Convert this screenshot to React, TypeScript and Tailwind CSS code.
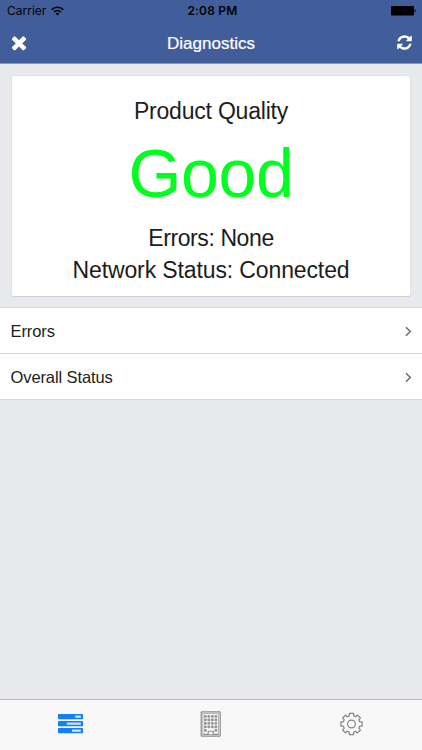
interface ListRowProps {
  label: string;
}

function StatusBar() {
  return (
    <div className="h-[22px] grid grid-cols-3 items-center pl-[7px] pr-[6px] text-black font-['Inter',sans-serif] text-[12px]">
      <div className="flex items-center gap-[5px]">
        <span>Carrier</span>
        <svg width="13" height="10" viewBox="0 0 13 10" fill="none" stroke="#000" strokeWidth="1.6">
          <path d="M.7 3.7a8.2 8.2 0 0 1 11.6 0" />
          <path d="M2.9 6a5.1 5.1 0 0 1 7.2 0" />
          <path d="M6.5 9.6 4.5 7.6a2.8 2.8 0 0 1 4 0z" fill="#000" stroke="none" />
        </svg>
      </div>
      <span className="pl-[2px] text-center font-semibold tracking-[0.2px]">2:08 PM</span>
      <svg className="justify-self-end" width="26" height="10" viewBox="0 0 26 10">
        <rect x="1" width="23" height="9.5" rx="1" />
        <path d="M24.7 3.2c1.4.3 1.4 2.8 0 3.1z" />
      </svg>
    </div>
  );
}

function Header() {
  return (
    <header className="h-16 shrink-0 bg-[#415e9b] border-b border-[#8698be]">
      <StatusBar />
      <div className="h-[41px] grid grid-cols-[1fr_auto_1fr] items-center pl-2 pr-[9px] text-white">
        <svg width="22" height="22" viewBox="0 0 1792 1856" fill="currentColor">
          <path d="M1490 1322q0 40-28 68l-136 136q-28 28-68 28t-68-28l-294-294-294 294q-28 28-68 28t-68-28l-136-136q-28-28-28-68t28-68l294-294-294-294q-28-28-28-68t28-68l136-136q28-28 68-28t68 28l294 294 294-294q28-28 68-28t68 28l136 136q28 28 28 68t-28 68l-294 294 294 294q28 28 28 68z" />
        </svg>
        <h1 className="pt-[3px] pl-[1px] text-[17px] leading-[22px] [-webkit-text-stroke:0.2px_#fff]">Diagnostics</h1>
        <svg className="justify-self-end" width="17" height="17" viewBox="0 0 1792 1792" fill="currentColor">
          <path d="M1639 1056q0 5-1 7-64 268-268 434.5t-478 166.5q-146 0-282.5-55t-243.5-157l-129 129q-19 19-45 19t-45-19-19-45v-448q0-26 19-45t45-19h448q26 0 45 19t19 45-19 45l-137 137q71 66 161 102t187 36q134 0 250-65t186-179q11-17 53-117 8-23 30-23h192q13 0 22.5 9.5t9.5 22.5zm25-800v448q0 26-19 45t-45 19h-448q-26 0-45-19t-19-45 19-45l138-138q-148-137-349-137-134 0-250 65t-186 179q-11 17-53 117-8 23-30 23h-199q-13 0-22.5-9.5t-9.5-22.5v-7q65-268 270-434.5t480-166.5q146 0 284 55.5t245 156.5l130-129q19-19 45-19t45 19 19 45z" />
        </svg>
      </div>
    </header>
  );
}

function QualityCard() {
  return (
    <section className="mx-[11px] mt-[11px] h-[222px] shrink-0 rounded-[3px] border border-[#e1e2e5] border-b-[#cfd0d4] bg-white pt-[19px] flex flex-col items-center text-[23px] leading-8">
      <p className="tracking-[-0.2px]">Product Quality</p>
      <p className="h-[95px] text-[68px] leading-[92px] tracking-[-0.3px] text-[#00ff1e]">Good</p>
      <p className="tracking-[-0.4px]">Errors: None</p>
      <p className="tracking-[-0.12px]">Network Status: Connected</p>
    </section>
  );
}

function ListRow({ label }: ListRowProps) {
  return (
    <li className="h-[46px] flex items-center justify-between border-b border-[#d4d5d8] pl-[10.5px] pr-[10px] pt-[2px] text-[16.5px] tracking-[-0.1px]">
      <span>{label}</span>
      <svg width="8" height="11" viewBox="0 0 8 11" fill="none" stroke="#6b6b6b" strokeWidth="1.5">
        <path d="M2 1.2 6.3 5.5 2 9.8" />
      </svg>
    </li>
  );
}

function TasksIcon() {
  return (
    <svg width="26" height="20" viewBox="0 0 26 20">
      <g fill="#147efb">
        <rect x="1" y="0" width="25" height="5.3" rx="0.7" />
        <rect x="1" y="7" width="25" height="5.3" rx="0.7" />
        <rect x="1" y="14" width="25" height="5.3" rx="0.7" />
      </g>
      <g fill="#d9ebff">
        <rect x="18.3" y="1.6" width="5.5" height="2.1" />
        <rect x="9.8" y="8.6" width="14" height="2.1" />
        <rect x="15" y="15.6" width="8.8" height="2.1" />
      </g>
    </svg>
  );
}

function BuildingIcon() {
  const rows = [4, 7.5, 11, 14.5, 18];
  const cols = [3.8, 7.3, 10.8, 14.3];
  return (
    <svg width="21" height="26" viewBox="0 0 21 26" fill="none" stroke="#8c8c8c">
      <rect x="1.2" y="0.8" width="19" height="24.4" rx="0.8" strokeWidth="1.2" />
      <rect x="2.8" y="2.4" width="15.8" height="21.2" stroke="#b0b0b0" strokeWidth="1" />
      {rows.map((y) => cols.map((x) => {
        // The door takes the two middle windows of the ground floor
        if (y === 18 && x > 4 && x < 14) return null;
        return <rect key={`${x}-${y}`} x={x + 0.2} y={y} width="2.7" height="2.7" rx="0.8" fill="#949494" stroke="none" />;
      }))}
      <path d="M3.2 23.4h5v-3.2h5v3.2h5" strokeWidth="1.1" />
    </svg>
  );
}

function GearIcon() {
  // One tooth plus the valley next to it, turned eight times
  const points = Array.from({ length: 8 }).flatMap((_, i) =>
    [[-15, 8.4], [-11, 10.8], [11, 10.8], [15, 8.4]].map(([deg, r]) => {
      const a = ((i * 45 + deg - 90) * Math.PI) / 180;
      return `${(11.5 + r * Math.cos(a)).toFixed(2)},${(12 + r * Math.sin(a)).toFixed(2)}`;
    })
  );
  return (
    <svg width="24" height="24" viewBox="0 0 24 24" fill="none" stroke="#858585" strokeWidth="1.2" strokeLinejoin="round">
      <polygon points={points.join(' ')} />
      <circle cx="11.5" cy="12" r="3.9" />
    </svg>
  );
}

export default function App() {
  return (
    <div className="w-[422px] h-[750px] flex flex-col overflow-hidden bg-[#e8e9ed] text-[#1c1c1c] font-['Liberation_Sans',sans-serif]">
      <Header />
      <QualityCard />
      <ul className="mt-[10px] bg-white border-t border-[#d4d5d8]">
        <ListRow label="Errors" />
        <ListRow label="Overall Status" />
      </ul>
      <nav className="mt-auto h-[51px] grid grid-cols-3 place-items-center border-t border-[#b9babd] bg-[#f8f8f8] pb-[2px]">
        <TasksIcon />
        <BuildingIcon />
        <GearIcon />
      </nav>
    </div>
  );
}
